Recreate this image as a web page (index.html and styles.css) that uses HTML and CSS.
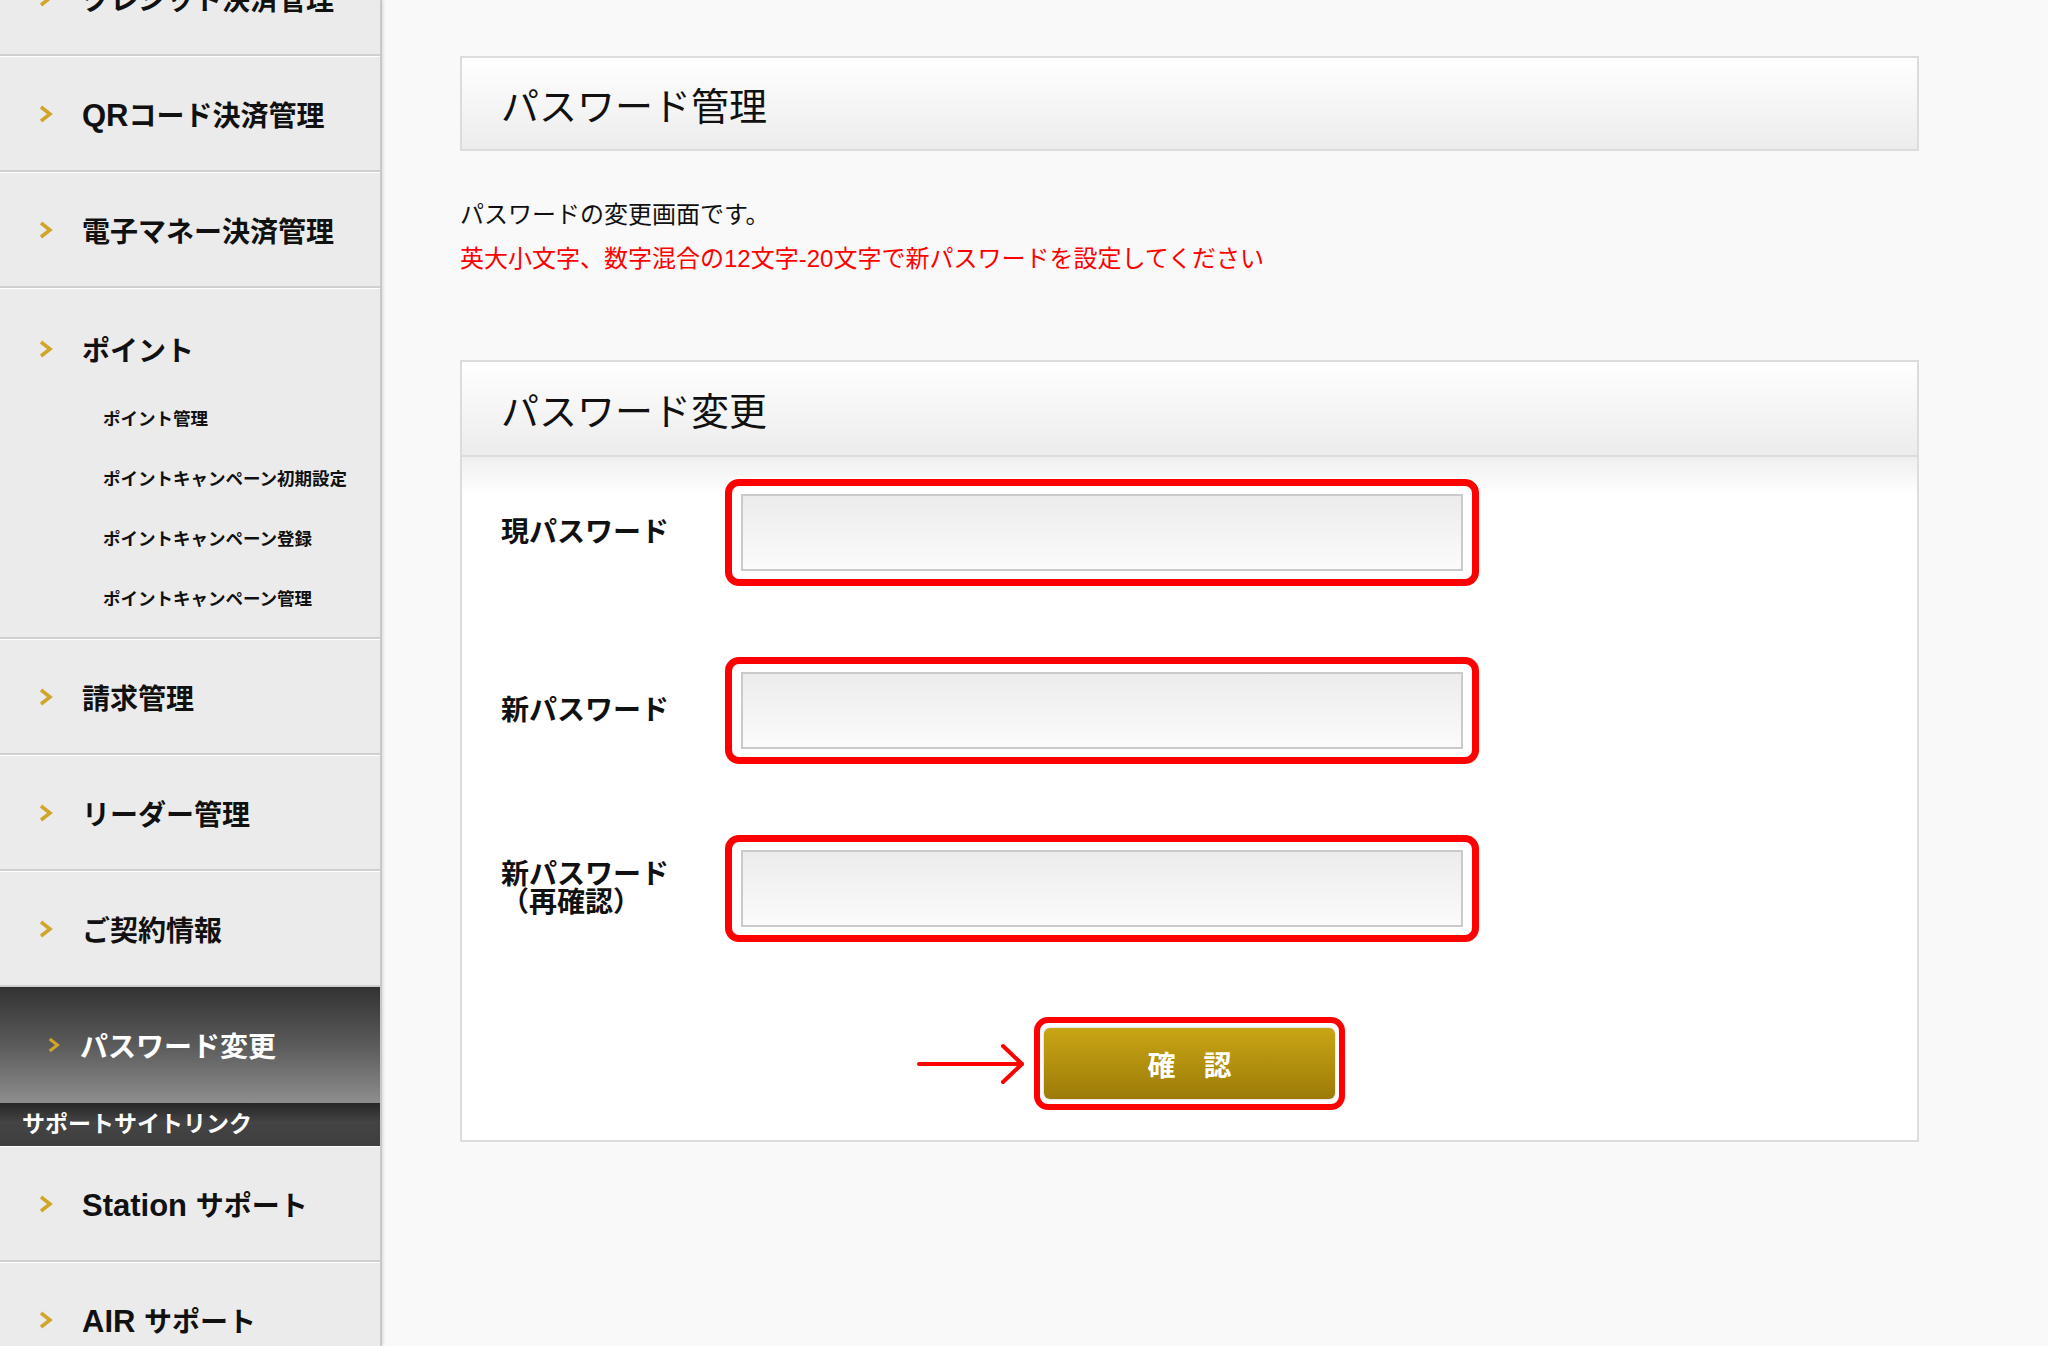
FILE: index.html
```html
<!DOCTYPE html>
<html lang="ja">
<head>
    <meta charset="UTF-8">
    <title>パスワード変更</title>
    <link rel="stylesheet" href="styles.css">
</head>
<body>
<!-- サイドメニュー -->
<aside class="side">
    <ul class="menu">
        <li class="menu-item"><svg class="chev" viewBox="0 0 14 18"><polyline points="2,2 11,9 2,16"/></svg>クレジット決済管理</li>
        <li class="menu-item"><svg class="chev" viewBox="0 0 14 18"><polyline points="2,2 11,9 2,16"/></svg><span><span class="en">QR</span>コード決済管理</span></li>
        <li class="menu-item"><svg class="chev" viewBox="0 0 14 18"><polyline points="2,2 11,9 2,16"/></svg>電子マネー決済管理</li>
        <li class="menu-group">
            <div class="group-head"><svg class="chev" viewBox="0 0 14 18"><polyline points="2,2 11,9 2,16"/></svg>ポイント</div>
            <ul class="sub-menu">
                <li>ポイント管理</li>
                <li>ポイントキャンペーン初期設定</li>
                <li>ポイントキャンペーン登録</li>
                <li>ポイントキャンペーン管理</li>
            </ul>
        </li>
        <li class="menu-item"><svg class="chev" viewBox="0 0 14 18"><polyline points="2,2 11,9 2,16"/></svg>請求管理</li>
        <li class="menu-item"><svg class="chev" viewBox="0 0 14 18"><polyline points="2,2 11,9 2,16"/></svg>リーダー管理</li>
        <li class="menu-item"><svg class="chev" viewBox="0 0 14 18"><polyline points="2,2 11,9 2,16"/></svg>ご契約情報</li>
        <li class="menu-item active"><svg class="chev" viewBox="0 0 14 18"><polyline points="2,2 11,9 2,16"/></svg>パスワード変更</li>
        <li class="support-head">サポートサイトリンク</li>
        <li class="menu-item"><svg class="chev" viewBox="0 0 14 18"><polyline points="2,2 11,9 2,16"/></svg><span><span class="en">Station </span>サポート</span></li>
        <li class="menu-item"><svg class="chev" viewBox="0 0 14 18"><polyline points="2,2 11,9 2,16"/></svg><span><span class="en">AIR </span>サポート</span></li>
    </ul>
</aside>

<main class="main">
    <h1 class="page-head">パスワード管理</h1>

    <div class="intro">
        <p>パスワードの変更画面です。</p>
        <p class="note">英大小文字、数字混合の12文字-20文字で新パスワードを設定してください</p>
    </div>

    <section class="panel">
        <h2 class="panel-head">パスワード変更</h2>
        <form class="panel-body">
            <div class="form-row">
                <label class="form-label" for="pw-now">現パスワード</label>
                <div class="mark"><input class="pw-input" type="password" id="pw-now"></div>
            </div>
            <div class="form-row">
                <label class="form-label" for="pw-new">新パスワード</label>
                <div class="mark"><input class="pw-input" type="password" id="pw-new"></div>
            </div>
            <div class="form-row">
                <label class="form-label" for="pw-again">新パスワード<br>（再確認）</label>
                <div class="mark"><input class="pw-input" type="password" id="pw-again"></div>
            </div>
            <div class="btn-row">
                <div class="btn-mark">
                    <svg class="arrow" viewBox="0 0 110 44"><line x1="3" y1="22" x2="106" y2="22"/><polyline points="87,4 106,22 87,40"/></svg>
                    <button class="btn" type="button">確　認</button>
                </div>
            </div>
        </form>
    </section>
</main>
</body>
</html>
```

FILE: styles.css
```css
body{
    margin: 0;
    background-color: #f9f9f9;
    font-family: "Liberation Sans", "Noto Sans CJK JP", sans-serif;
    color: #111;
    display: flex;
    height: 100vh;
    overflow: hidden;
}

/* サイドメニュー */
.side{
    width: 380px;
    flex-shrink: 0;
    background-color: #ebebeb;
    border-right: 2px solid #c8c8c8;
    box-shadow: 1px 0 3px rgba(0, 0, 0, .15);
    overflow: hidden;
}
.menu{
    list-style: none;
    margin: -60px 0 0;
    padding: 0;
}
.menu-item,
.group-head{
    display: flex;
    align-items: center;
    gap: 29px;
    padding-left: 39px;
    font-size: 28px;
    font-weight: bold;
}
.menu-item{
    height: 113px;
    border-top: 1px solid #fff;
    border-bottom: 2px solid #cfcfcf;
}
.menu-item .en{
    font-size: 31px;
}
.chev{
    width: 14px;
    height: 18px;
    flex-shrink: 0;
    fill: none;
    stroke: #cfa52a;
    stroke-width: 3.5;
}
.menu-group{
    padding: 40px 0 8px;
    border-top: 1px solid #fff;
    border-bottom: 2px solid #cfcfcf;
}
.group-head{
    height: 40px;
}
.sub-menu{
    list-style: none;
    margin: 20px 0 0;
    padding: 0 0 0 103px;
}
.sub-menu li{
    height: 60px;
    line-height: 60px;
    font-size: 17.5px;
    font-weight: bold;
}
.menu-item.active{
    background: linear-gradient(#333333, #5a5a5a 50%, #8c8c8c);
    color: #fff;
    border-top-color: #2e2e2e;
    border-bottom-color: #8c8c8c;
    padding-left: 48px;
    gap: 20px;
}
.menu-item.active .chev{
    width: 12px;
    height: 16px;
}
.support-head{
    height: 43px;
    line-height: 43px;
    padding-left: 22px;
    background: linear-gradient(#262626, #444 45%, #3e3e3e);
    color: #fff;
    font-size: 23px;
    font-weight: bold;
}

/* メイン */
.main{
    flex: 1;
    padding: 56px 0 0 78px;
}
.page-head,
.panel-head{
    display: flex;
    align-items: center;
    margin: 0;
    padding-left: 39px;
    font-size: 38px;
    font-weight: normal;
    background: linear-gradient(#fff, #ececec);
}
.page-head{
    width: 1459px;
    height: 95px;
    box-sizing: border-box;
    border: 2px solid #dcdcdc;
}
.intro{
    margin-top: 42px;
    font-size: 24px;
    line-height: 44px;
}
.intro p{
    margin: 0;
}
.intro .note{
    color: #ff0000;
}

.panel{
    width: 1459px;
    box-sizing: border-box;
    margin-top: 79px;
    border: 2px solid #dcdcdc;
    background-color: #fff;
}
.panel-head{
    height: 93px;
    border-bottom: 2px solid #dcdcdc;
}
.panel-body{
    padding: 22px 0 30px 39px;
    background: linear-gradient(#efefef, #fff 38px);
}
.form-row{
    display: flex;
    align-items: center;
}
.form-row + .form-row{
    margin-top: 71px;
}
.form-label{
    width: 224px;
    font-size: 28px;
    line-height: 28px;
    font-weight: bold;
}
.mark{
    border: 7px solid #ff0000;
    border-radius: 14px;
    padding: 8px 9px;
    background-color: #fff;
    box-shadow: 0 0 0 2px rgba(255, 255, 255, .8);
}
.pw-input{
    display: block;
    width: 722px;
    height: 77px;
    box-sizing: border-box;
    margin: 0;
    padding: 0 12px;
    border: 2px solid #cacaca;
    background: linear-gradient(#ececec, #fbfbfb);
    font-size: 24px;
}

.btn-row{
    display: flex;
    justify-content: center;
    margin: 75px 0 0 -39px;
}
.btn-mark{
    position: relative;
    border: 6px solid #ff0000;
    border-radius: 14px;
    padding: 5px 4px;
    background-color: #fff;
}
.btn{
    display: block;
    width: 291px;
    height: 71px;
    border: none;
    border-radius: 6px;
    background: linear-gradient(#c9a514, #9c7b08);
    box-shadow: 0 0 2px rgba(0, 0, 0, .35);
    color: #fff;
    font-family: inherit;
    font-size: 28px;
    font-weight: bold;
}
/* 注釈の矢印 */
.arrow{
    position: absolute;
    right: calc(100% + 14px);
    top: 50%;
    width: 110px;
    height: 44px;
    transform: translateY(-50%);
    fill: none;
    stroke: #ff0000;
    stroke-width: 4;
    stroke-linecap: round;
    stroke-linejoin: round;
}
```
